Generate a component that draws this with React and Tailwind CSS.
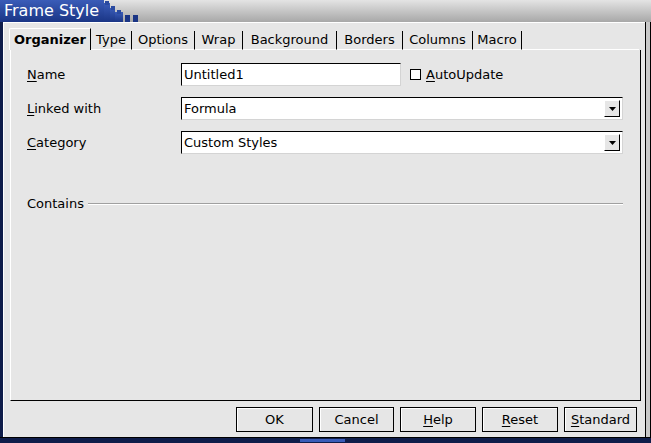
import React from 'react';

const tabs = [
  { label: 'Organizer', w: 82 },
  { label: 'Type', w: 41 },
  { label: 'Options', w: 63 },
  { label: 'Wrap', w: 48 },
  { label: 'Background', w: 94 },
  { label: 'Borders', w: 66 },
  { label: 'Columns', w: 70 },
  { label: 'Macro', w: 49 },
];

function U({ children }) {
  return <span className="underline underline-offset-2">{children}</span>;
}

function Field({ children, className = '' }) {
  return (
    <div className={`h-[23px] bg-white border border-t-black border-l-black border-b-[#d4d4d4] border-r-[#d4d4d4] flex items-center pl-[2px] ${className}`}>
      {children}
    </div>
  );
}

function Select({ value }) {
  return (
    <Field className="flex-1 pr-[2px]">
      <span className="flex-1">{value}</span>
      <div className="w-[16px] h-[17px] bg-[#e6e6e6] border border-t-white border-l-white border-b-black border-r-black flex items-center justify-center">
        <svg width="7" height="4" viewBox="0 0 7 4">
          <polygon points="0,0 7,0 3.5,4" fill="#000" />
        </svg>
      </div>
    </Field>
  );
}

function Button({ children, w }) {
  return (
    <div
      className="h-[25px] border border-black bg-[#e6e6e6] shadow-[inset_1px_1px_0_#fff] flex items-center justify-center"
      style={{ width: w }}
    >
      {children}
    </div>
  );
}

export default function App() {
  return (
    <div
      className="w-[651px] h-[443px] bg-[#0f1d4a] flex flex-col text-[13px] text-black overflow-hidden"
      style={{ fontFamily: '"DejaVu Sans", sans-serif' }}
    >
      {/* title bar */}
      <div className="relative h-[22px] bg-gradient-to-b from-[#e4e4e4] to-[#a8a8a8]">
        <svg className="absolute left-0 top-0" width="145" height="22" viewBox="0 0 145 22">
          <defs>
            <linearGradient id="bl" x1="0" y1="0" x2="0" y2="1">
              <stop offset="0" stopColor="#3a5cb8" />
              <stop offset="1" stopColor="#1a3585" />
            </linearGradient>
          </defs>
          <rect x="0" y="0" width="104" height="22" fill="url(#bl)" />
          <rect x="104" y="3" width="6" height="19" fill="url(#bl)" />
          <rect x="110" y="8" width="5" height="14" fill="url(#bl)" />
          <rect x="115" y="12" width="8" height="10" fill="url(#bl)" />
          <rect x="105" y="1" width="4" height="4" fill="#2a4aa0" />
          <rect x="111" y="6" width="4" height="4" fill="#2a4aa0" />
          <rect x="117" y="10" width="4" height="4" fill="#2a4aa0" />
          <rect x="125" y="15" width="5" height="7" fill="#1a3585" />
          <rect x="133" y="15" width="5" height="7" fill="#1a3585" />
        </svg>
        <div className="absolute left-[4px] top-[1px] text-white text-[16px] leading-[20px]">Frame Style</div>
      </div>

      <div className="flex-1 flex min-h-0">
        <div className="w-[3px] bg-[#0f1d4a]" />
        <div className="flex-1 bg-[#e6e6e6] border-l border-t border-white flex flex-col pt-[5px] pl-[5px] pr-[4px]">
          {/* tabs */}
          <div className="flex items-end h-[22px]">
            {tabs.map((t, i) =>
              i === 0 ? (
                <div
                  key={t.label}
                  className="h-[22px] border-t border-l border-white border-r border-r-black font-bold flex items-center justify-center rounded-tl-[2px]"
                  style={{ width: t.w }}
                >
                  {t.label}
                </div>
              ) : (
                <div
                  key={t.label}
                  className="h-[19px] border-r border-r-black border-b border-b-white flex items-center justify-center"
                  style={{ width: t.w }}
                >
                  {t.label}
                </div>
              )
            )}
            <div className="flex-1 h-[1px] bg-white mr-[2px]" />
          </div>
          {/* panel */}
          <div className="h-[351px] ml-[1px] border-l border-white border-r border-r-black border-b border-b-black flex flex-col pl-[16px] pr-[17px] pt-[13px]">
            <div className="flex items-center h-[23px]">
              <div className="w-[154px]"><U>N</U>ame</div>
              <Field className="w-[220px]">Untitled1</Field>
              <div className="ml-[9px] w-[11px] h-[11px] bg-white border border-black" />
              <div className="ml-[5px]"><U>A</U>utoUpdate</div>
            </div>
            <div className="flex items-center h-[23px] mt-[11px]">
              <div className="w-[154px]"><U>L</U>inked with</div>
              <Select value="Formula" />
            </div>
            <div className="flex items-center h-[23px] mt-[11px]">
              <div className="w-[154px]"><U>C</U>ategory</div>
              <Select value="Custom Styles" />
            </div>
            <div className="flex items-center mt-[40px]">
              <div>Contains</div>
              <div className="flex-1 ml-[4px] border-t border-t-[#a0a0a0] border-b border-b-white" />
            </div>
          </div>
          {/* buttons */}
          <div className="flex justify-end gap-[6px] mt-[6px] pr-[4px]">
            <Button w={77}>OK</Button>
            <Button w={75}>Cancel</Button>
            <Button w={76}><span><U>H</U>elp</span></Button>
            <Button w={76}><span><U>R</U>eset</span></Button>
            <Button w={73}><span><U>S</U>tandard</span></Button>
          </div>
        </div>
        <div className="w-[6px] bg-[#c8c8c8] border-l border-r border-black" />
      </div>
      <div className="h-[6px] bg-[#0f1d4a] border-t border-black relative">
        <div className="absolute left-[300px] top-[1px] w-[45px] h-[3px] bg-[#3a5cb8]" />
      </div>
    </div>
  );
}
